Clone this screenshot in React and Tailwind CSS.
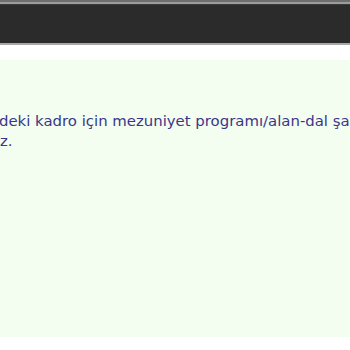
export default function App() {
  return (
    <div className="w-[350px] h-[350px] overflow-hidden bg-white">
      <div className="h-[2px] bg-[#6e6e6e]" />
      <div className="h-[2px] bg-[#9c9c9c]" />
      <div className="h-[39px] bg-[#2b2b2b] border-t border-[#3a3a3a]" />
      <div className="h-[2px] bg-[#a8a8a8]" />
      <div className="h-[15px] bg-white" />
      <div className="h-[277px] bg-[#f3fdf0] pt-[51px]">
        <div className="font-['DejaVu_Sans',Verdana,sans-serif] text-[14.9px] leading-[20px] text-[#3a368a] whitespace-nowrap">
          <p className="-ml-px">deki kadro için mezuniyet programı/alan-dal şa</p>
          <p>z.</p>
        </div>
      </div>
    </div>
  )
}
